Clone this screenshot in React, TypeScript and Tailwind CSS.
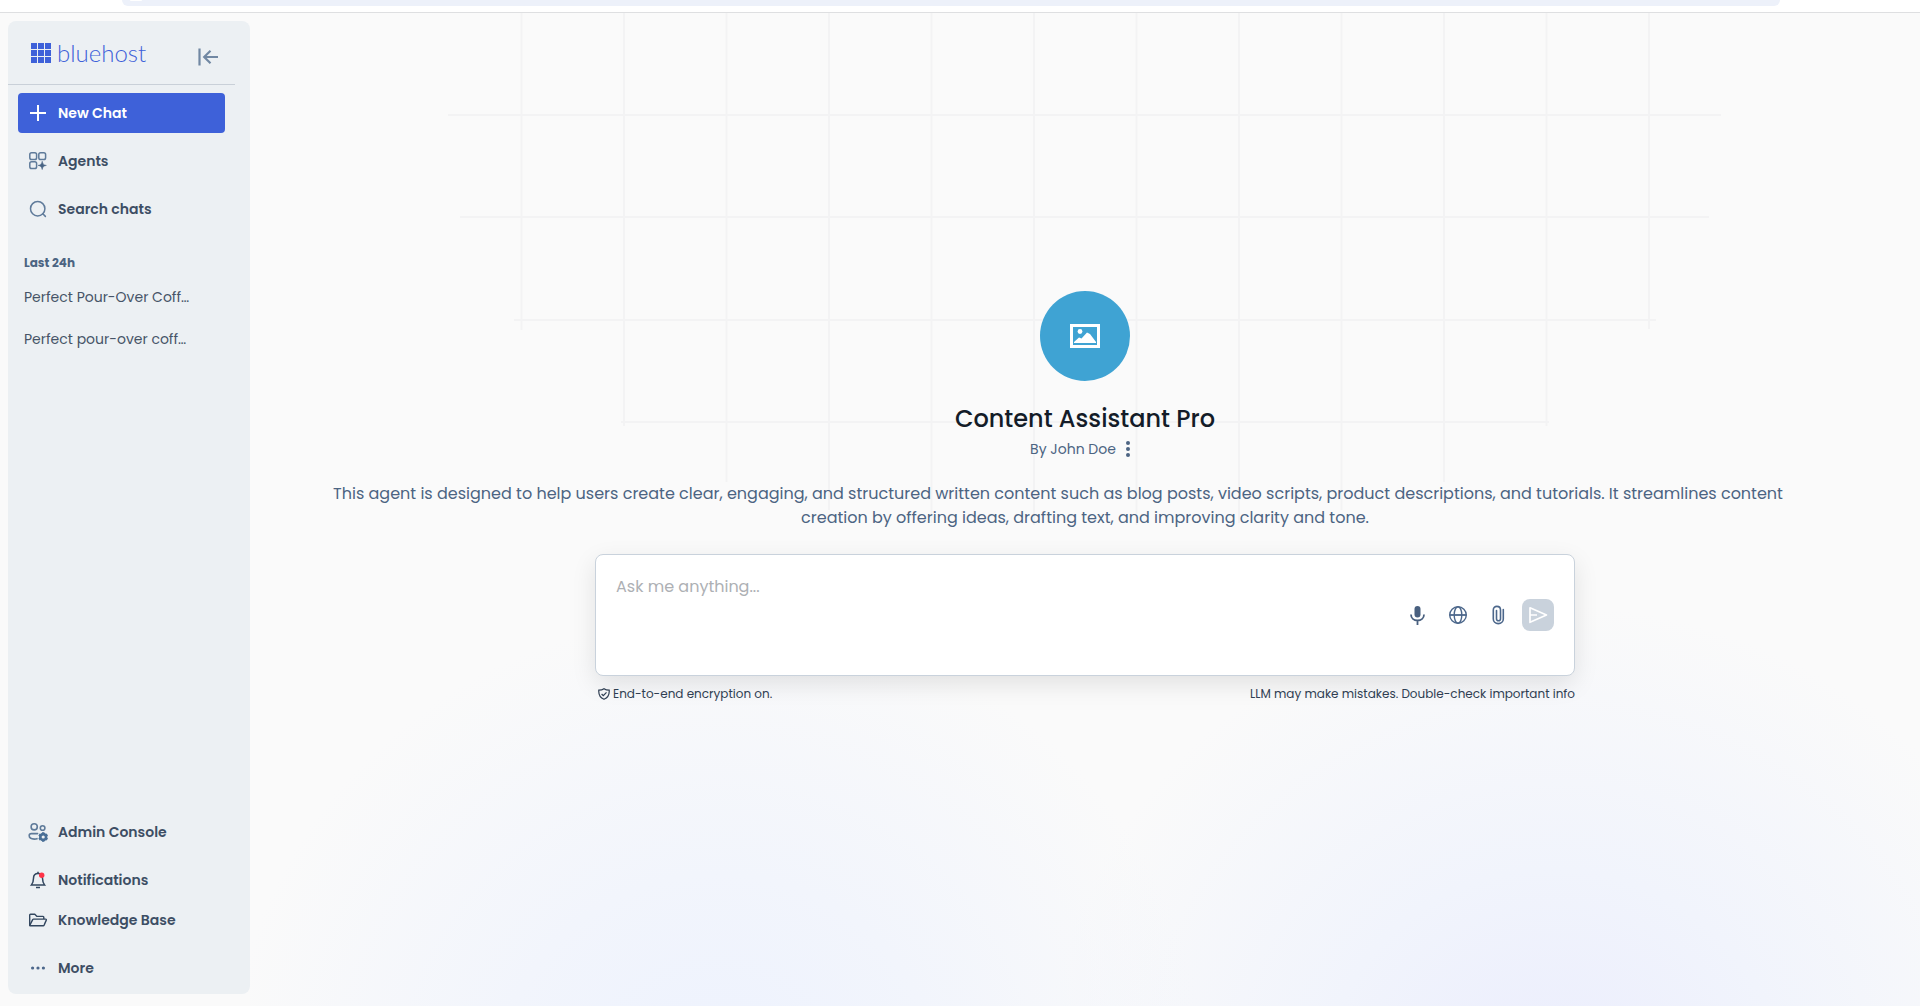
import React, { useState } from 'react';

interface NavItemProps {
  label: string;
  icon: React.ReactNode;
}

/* ---------- Icons ---------- */

const PlusIcon = () => (
  <svg className="h-5 w-5" viewBox="0 0 20 20" fill="none" stroke="currentColor" strokeWidth={2}>
    <path d="M10 2v16M2 10h16" />
  </svg>
);

const AgentsIcon = () => (
  <svg className="h-5 w-5" viewBox="0 0 20 20" fill="none" stroke="#5f7b9a" strokeWidth={1.5}>
    <rect x="1.8" y="1.8" width="6.8" height="6.8" rx="1.8" />
    <rect x="10.8" y="1.8" width="6.8" height="6.8" rx="1.8" />
    <rect x="1.8" y="10.8" width="6.8" height="6.8" rx="1.8" />
    <path
      d="M14.2 10.2c.7 3 1.3 3.6 4.2 4.2-2.900.6-3.500 1.200-4.200 4.200-.7-3-1.300-3.600-4.200-4.200 2.900-.6 3.500-1.200 4.200-4.200z"
      fill="#496484"
      stroke="#496484"
      strokeWidth={0.5}
    />
  </svg>
);

const SearchIcon = () => (
  <svg className="h-5 w-5" viewBox="0 0 20 20" fill="none" stroke="#5f7b9a" strokeWidth={1.5}>
    <circle cx="9.7" cy="9.7" r="7.2" />
    <path d="M14.8 14.8l2.600 2.600" strokeLinecap="round" />
  </svg>
);

const AdminIcon = () => (
  <svg className="h-5 w-5 overflow-visible" viewBox="0 0 20 20" fill="none" stroke="#5f7b9a" strokeWidth={1.6}>
    <circle cx="6.2" cy="4.8" r="3.1" />
    <circle cx="14.6" cy="6" r="2.3" />
    <path d="M9.6 11.6H3.4c-1.3 0-2.2.8-2.2 1.9 0 2.3 2.2 3.6 5.2 3.6 1 0 1.9-.1 2.6-.4" strokeLinecap="round" />
    <circle cx="15.2" cy="15" r="2.9" stroke="#496f96" strokeWidth={2.6} />
    <path
      d="M15.200 10.200v1.600M15.200 18.200v1.600M11 12.600l1.400.800M18 16.600l1.400.800M11 17.400l1.400-.800M18 13.400l1.400-.800"
      stroke="#496f96"
      strokeWidth={2.4}
    />
  </svg>
);

const BellIcon = () => (
  <svg className="h-5 w-5" viewBox="0 0 20 20" fill="none" stroke="#33475f" strokeWidth={1.5}>
    <path d="M10 3.4c-2.9 0-4.5 2.1-4.5 4.8 0 4-1 5.2-2.2 6.9h13.4c-1.2-1.7-2.2-2.900-2.200-6.900 0-2.700-1.600-4.800-4.500-4.800z" />
    <path d="M10 1.800v1.600M8 17.600h4" />
    <circle cx="13.700" cy="5.300" r="2.700" fill="#ff3347" stroke="none" />
  </svg>
);

const FolderIcon = () => (
  <svg className="h-5 w-5" viewBox="0 0 20 20" fill="none" stroke="#33475f" strokeWidth={1.4} strokeLinejoin="round">
    <path d="M1.700 15.400V5c0-.5.3-.8.8-.8h4.300l2.200 2.200h6c.5 0 .8.3.8.8v1.900" />
    <path d="M1.700 15.400l3-5.800c.2-.3.4-.5.800-.5h12.100c.6 0 .9.5.7 1l-2.200 5c-.2.400-.4.600-.8.600H2.200c-.3 0-.5-.1-.5-.3z" />
  </svg>
);

const MoreIcon = () => (
  <svg className="h-5 w-5" viewBox="0 0 20 20" fill="#4c678b">
    <circle cx="4.600" cy="10" r="1.600" />
    <circle cx="10" cy="10" r="1.600" />
    <circle cx="15.400" cy="10" r="1.600" />
  </svg>
);

const CollapseIcon = () => (
  <svg className="h-5 w-5" viewBox="0 0 20 20" fill="none" stroke="#7188a3" strokeWidth={2.2}>
    <path d="M1.500 1.500v17M20 10H6.500M12.500 3.800L6.200 10l6.300 6.200" />
  </svg>
);

const PictureIcon = () => (
  <svg className="h-6 w-[30px]" viewBox="0 0 30 24" fill="#fff">
    <path fillRule="evenodd" d="M0 0h30v24H0zM3 3v18h24V3z" />
    <circle cx="10" cy="7.500" r="2.400" />
    <path d="M4 19v-1l5-4.500 2.500 1L17 8.500l3 1.500 6 8v1z" />
  </svg>
);

const MicIcon = () => (
  <svg className="h-5 w-5" viewBox="0 0 20 20" fill="#49607f">
    <rect x="6.500" y="1" width="6" height="11.500" rx="3" />
    <path d="M3 9.500c0 3.500 2.800 6 6.500 6s6.500-2.500 6.500-6M9.500 15.500V20" fill="none" stroke="#49607f" strokeWidth={1.800} />
  </svg>
);

const GlobeIcon = () => (
  <svg className="h-5 w-5" viewBox="0 0 20 20" fill="none" stroke="#4c678b" strokeWidth={1.400}>
    <circle cx="10" cy="10" r="8.300" />
    <ellipse cx="10" cy="10" rx="3.800" ry="8.300" />
    <path d="M1.700 10h16.600" strokeWidth={1.800} />
  </svg>
);

const ClipIcon = () => (
  <svg className="h-5 w-5" viewBox="0 0 20 20" fill="none" stroke="#4c678b" strokeWidth={1.600} strokeLinecap="round">
    <path d="M15.300 4.500v9.500c0 2.600-2.100 4.600-5 4.600s-5-2-5-4.600V5c0-2.100 1.500-3.600 3.600-3.600s3.600 1.500 3.600 3.600v8.800c0 1.200-.9 2-2 2s-2-.8-2-2V5.500" />
  </svg>
);

const SendIcon = () => (
  <svg className="h-5 w-5" viewBox="0 0 20 20" fill="none" stroke="#fff" strokeWidth={1.700} strokeLinejoin="round">
    <path d="M2 2.800l16.500 7.200L2 17.300V2.800zM2 10h7" />
  </svg>
);

const ShieldIcon = () => (
  <svg className="h-3 w-3" viewBox="0 0 12 12" fill="none" stroke="#2f3e52" strokeWidth={1.200}>
    <path d="M6 .7c1.500 1.100 3 1.500 5.200 1.500.300 4-1.200 7.500-5.200 9.100C2 9.700.500 6.200.800 2.200 3 2.200 4.500 1.800 6 .7z" />
    <path d="M3.600 6l1.700 1.700 3.200-3.400" />
  </svg>
);

/* ---------- Sidebar ---------- */

const NavItem: React.FC<NavItemProps> = ({ label, icon }) => (
  <button
    type="button"
    className="flex h-10 w-full items-center gap-[10px] rounded px-[10px] text-sm font-semibold text-[#3d4e64] hover:bg-slate-200"
  >
    {icon}
    {label}
  </button>
);

const chats = [
  { id: 1, title: 'Perfect Pour-Over Coff…' },
  { id: 2, title: 'Perfect pour-over coff…' },
];

const Sidebar = () => (
  <aside className="my-2 ml-2 mb-3 flex w-[242px] shrink-0 flex-col rounded-lg bg-[#ecf0f3] pb-[6px]">
    {/* Logo */}
    <div className="mr-[15px] flex h-16 items-start justify-between border-b border-[#c9d0d8] pt-[22px] pr-[17px] pl-[23px]">
      <div className="flex items-center gap-[6px] text-[#3e61d9]">
        <svg className="h-5 w-5" viewBox="0 0 20 20" fill="currentColor">
          <path d="M0 0h6v6H0zM7 0h6v6H7zM14 0h6v6h-6zM0 7h6v6H0zM7 7h6v6H7zM14 7h6v6h-6zM0 14h6v6H0zM7 14h6v6H7zM14 14h6v6h-6z" />
        </svg>
        <span className="font-[Lato,sans-serif] text-2xl leading-5 font-light">bluehost</span>
      </div>
      <button type="button" aria-label="Collapse sidebar" className="pt-1">
        <CollapseIcon />
      </button>
    </div>

    {/* Primary actions */}
    <nav className="mt-2 mr-[25px] ml-[10px] flex flex-col gap-2">
      <button
        type="button"
        className="flex h-10 items-center gap-[10px] rounded bg-[#3e61d9] px-[10px] text-sm font-semibold text-white"
      >
        <PlusIcon />
        New Chat
      </button>
      <NavItem label="Agents" icon={<AgentsIcon />} />
      <NavItem label="Search chats" icon={<SearchIcon />} />
    </nav>

    {/* History */}
    <section className="mt-6 ml-4 flex flex-col">
      <h2 className="text-xs leading-5 font-bold text-[#4c6482]">Last 24h</h2>
      <ul className="mt-[3px]">
        {chats.map((chat) => (
          <li key={chat.id} className="flex h-[42px] items-center">
            <a href="#chat" className="text-sm text-[#465467]">
              {chat.title}
            </a>
          </li>
        ))}
      </ul>
    </section>

    {/* Footer links */}
    <nav className="mt-auto mr-[25px] ml-[10px] flex flex-col gap-2">
      <NavItem label="Admin Console" icon={<AdminIcon />} />
      <div>
        <NavItem label="Notifications" icon={<BellIcon />} />
        <NavItem label="Knowledge Base" icon={<FolderIcon />} />
      </div>
      <NavItem label="More" icon={<MoreIcon />} />
    </nav>
  </aside>
);

/* ---------- Backdrop ---------- */

// [x, bottom end] of each vertical line
const verticals = [
  [521.5, 317], [624, 413], [726.5, 469], [829, 497], [931.5, 510], [1034, 512],
  [1136.5, 512], [1239, 510], [1341.5, 497], [1444, 469], [1546.5, 413], [1649, 316],
];

// [y, left end, right end] of each horizontal line
const horizontals = [
  [102, 448, 1721],
  [204, 460, 1709],
  [307, 514, 1656],
  [409, 621, 1549],
];

const Backdrop = () => (
  <div className="pointer-events-none absolute inset-0 overflow-hidden bg-[radial-gradient(ellipse_490px_470px_at_28%_108%,#edf2fe_0%,#f2f5fc_45%,transparent_100%),radial-gradient(ellipse_510px_480px_at_78%_108%,#ebedfd_0%,#f1f4fc_45%,transparent_100%)]">
    <svg
      className="mx-auto h-[520px] w-[1290px]"
      viewBox="440 0 1290 520"
      fill="none"
      stroke="#f3f3f4"
      strokeWidth={2}
    >
      {verticals.map(([x, end]) => (
        <path key={x} d={`M${x} 0V${end}`} />
      ))}
      {horizontals.map(([y, start, end]) => (
        <path key={y} d={`M${start} ${y}H${end}`} />
      ))}
    </svg>
  </div>
);

/* ---------- Main ---------- */

const ChatBox = () => {
  const [message, setMessage] = useState('');

  return (
    <div className="mt-6 w-full max-w-[980px]">
      <form
        onSubmit={(e) => e.preventDefault()}
        className="flex h-[122px] flex-col rounded-lg border border-[#c9d2dc] bg-white px-5 pt-5 shadow-[0_8px_24px_rgba(0,0,0,0.1)]"
      >
        <textarea
          aria-label="Message"
          placeholder="Ask me anything..."
          rows={1}
          value={message}
          onChange={(e) => setMessage(e.target.value)}
          className="block h-6 w-full resize-none text-base leading-6 text-[#2f3e52] outline-none placeholder:text-[#adb0b4]"
        />
        <div className="flex items-center justify-end">
          <button type="button" aria-label="Dictate" className="flex h-8 w-10 items-center justify-center">
            <MicIcon />
          </button>
          <button type="button" aria-label="Web search" className="flex h-8 w-10 items-center justify-center">
            <GlobeIcon />
          </button>
          <button type="button" aria-label="Attach file" className="flex h-8 w-10 items-center justify-center">
            <ClipIcon />
          </button>
          <button
            type="submit"
            aria-label="Send"
            className="ml-1 flex h-8 w-8 items-center justify-center rounded-lg bg-[#c9d2dc]"
          >
            <SendIcon />
          </button>
        </div>
      </form>
      <div className="mt-2 flex items-center justify-between text-xs leading-5 text-[#2f3e52]">
        <span className="flex items-center gap-[3px] pl-[3px]">
          <ShieldIcon />
          End-to-end encryption on.
        </span>
        <span>LLM may make mistakes. Double-check important info</span>
      </div>
    </div>
  );
};

const App: React.FC = () => {
  return (
    <div className="flex min-h-screen flex-col bg-[#fafafa] font-[Poppins,Inter,sans-serif]">
      {/* Browser edge */}
      <div className="h-[13px] border-b border-[#dedfe1] bg-white pr-[140px] pl-[122px]">
        <div className="h-[6px] overflow-hidden rounded-b-[14px] bg-[#edf1fa] pl-2">
          <div className="h-px w-3 rounded-b-full bg-white" />
        </div>
      </div>

      <div className="flex flex-1">
        <Sidebar />
        <main className="relative flex-1">
          <Backdrop />
          <div className="relative flex flex-col items-center px-6 pt-[278px]">
            <div className="flex h-[90px] w-[90px] items-center justify-center rounded-full bg-[#3fa3d3]">
              <PictureIcon />
            </div>
            <h1 className="mt-5 text-2xl leading-9 font-medium text-[#141c28]">Content Assistant Pro</h1>
            <div className="flex h-6 items-center text-sm text-[#4c6482]">
              By John Doe
              <button type="button" aria-label="Agent options" className="ml-2 flex w-4 justify-start pl-[2px]">
                <svg className="h-4 w-1" viewBox="0 0 4 16" fill="#4c6482">
                  <circle cx="2" cy="2" r="2" />
                  <circle cx="2" cy="8" r="2" />
                  <circle cx="2" cy="14" r="2" />
                </svg>
              </button>
            </div>
            <p className="mt-[21px] text-center text-base leading-6 text-[#4c6482]">
              <span className="block pr-[54px]">
                This agent is designed to help users create clear, engaging, and structured written content such as blog
                posts, video scripts, product descriptions, and tutorials. It streamlines content
              </span>
              creation by offering ideas, drafting text, and improving clarity and tone.
            </p>
            <ChatBox />
          </div>
        </main>
      </div>
    </div>
  );
};

export default App;
